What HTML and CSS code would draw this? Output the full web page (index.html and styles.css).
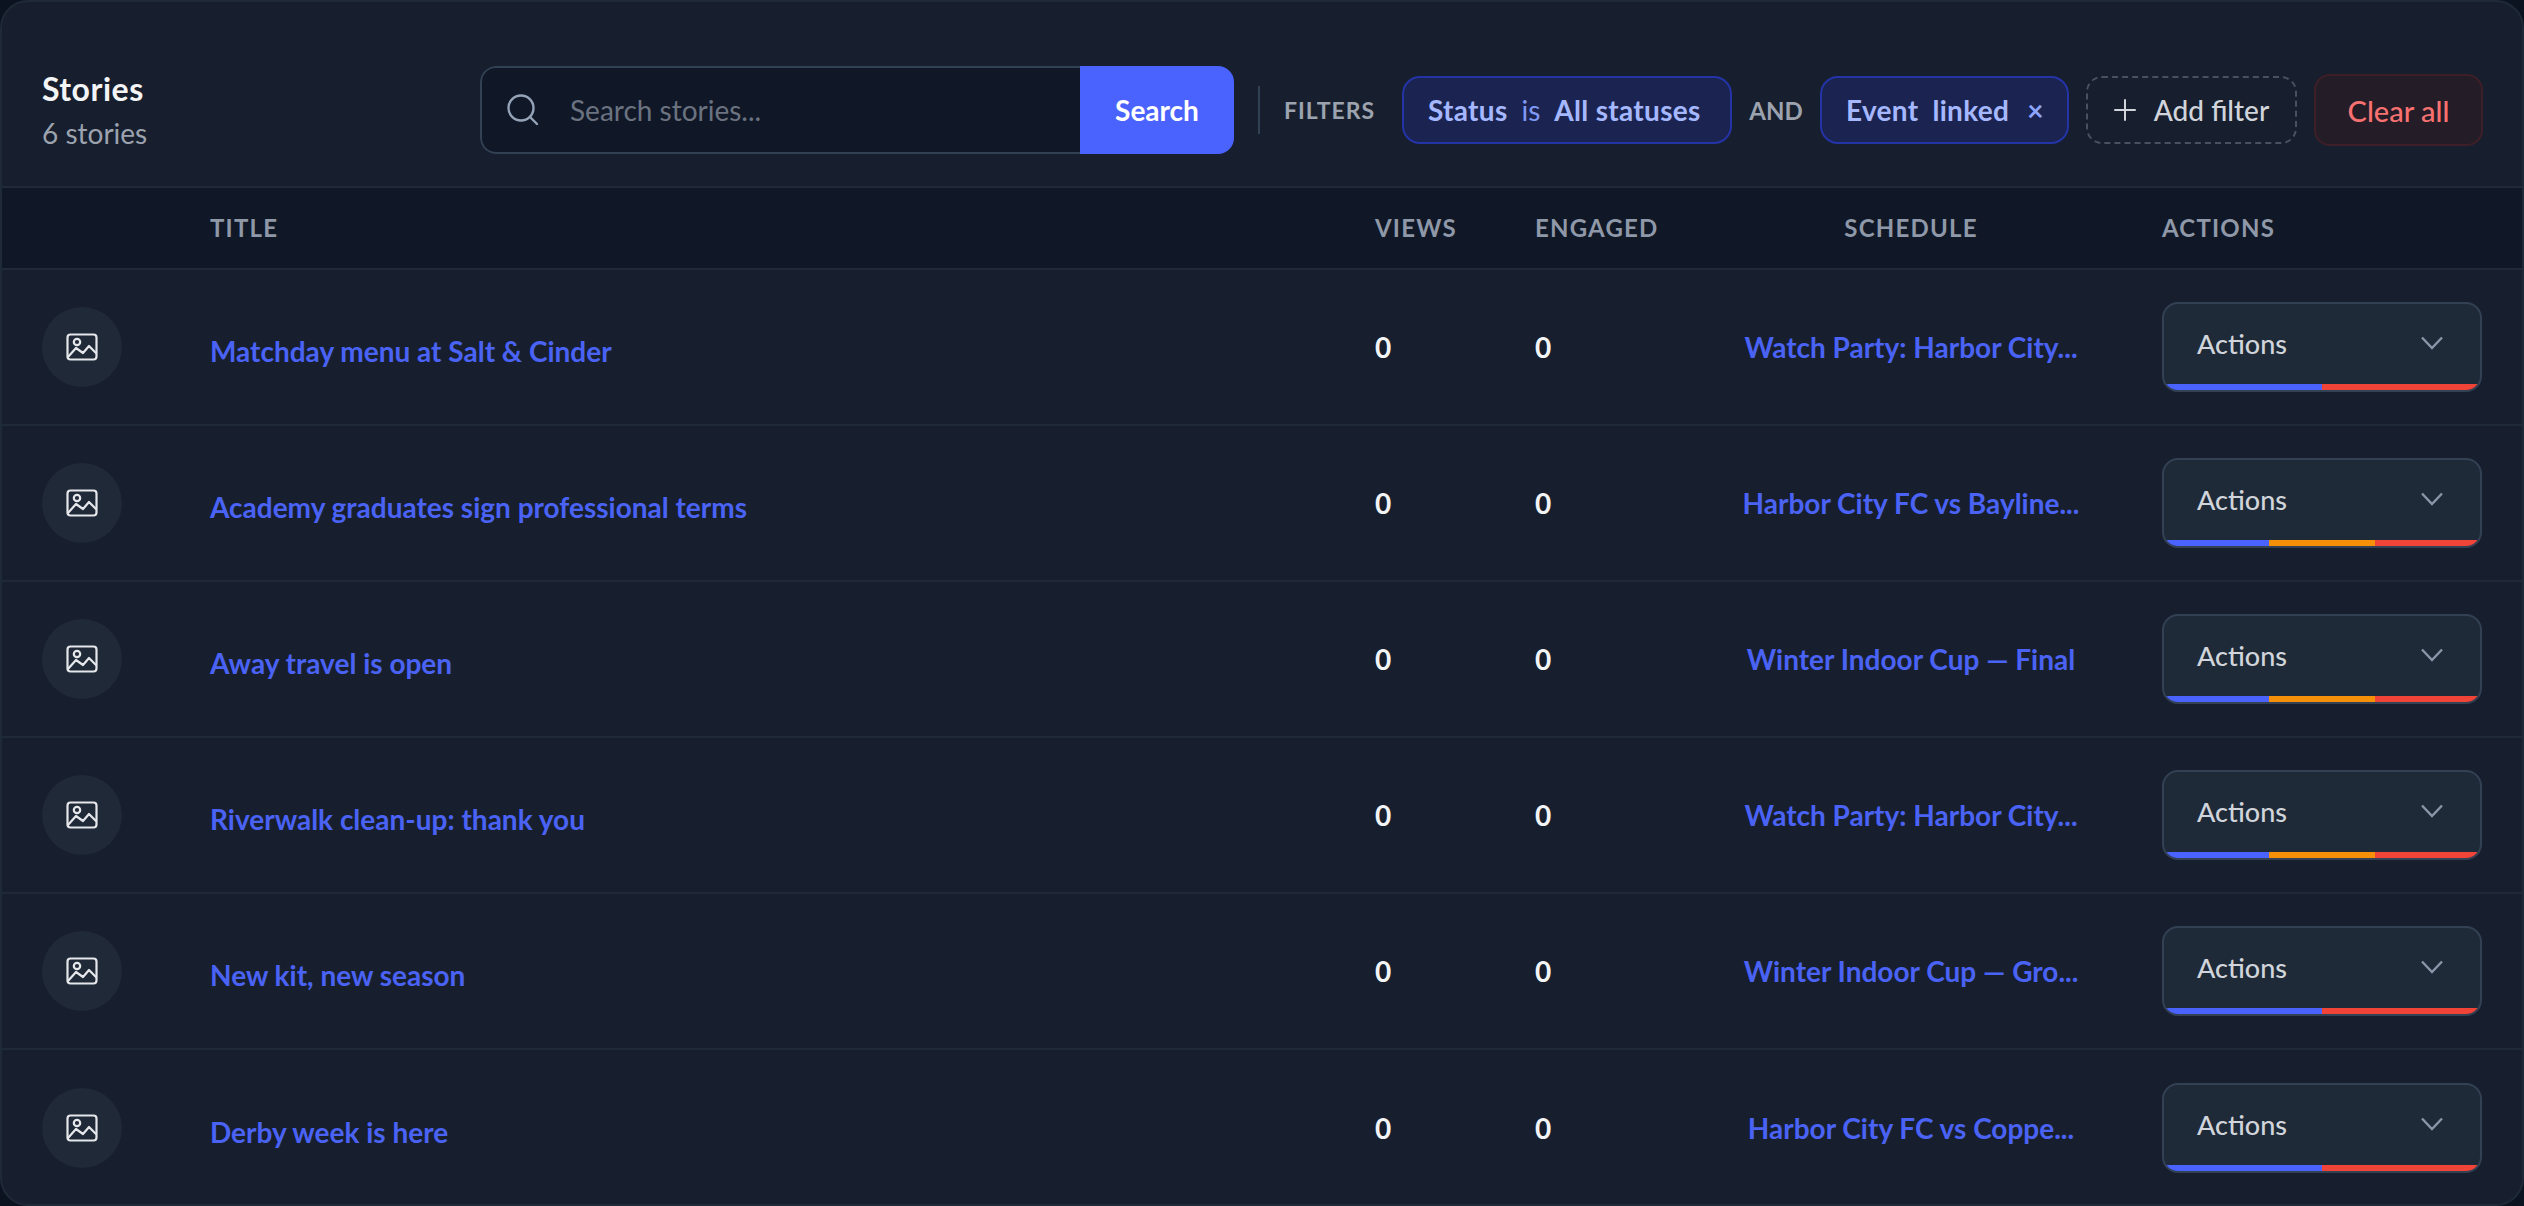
FILE: index.html
```html
<!DOCTYPE html>
<html lang="en">

<head>
    <meta charset="UTF-8">
    <title>Stories</title>
    <link rel="stylesheet" href="styles.css">
</head>

<body>
    <div class="panel">
        <div class="toolbar">
            <div class="heading">
                <div class="heading-title">Stories</div>
                <div class="heading-count">6 stories</div>
            </div>
            <div class="search">
                <div class="search-field">
                    <svg class="search-icon" width="34" height="34" viewBox="0 0 34 34" fill="none" stroke="#94a3b8" stroke-width="2.4" stroke-linecap="round">
                        <circle cx="15" cy="15" r="12.5"/>
                        <path d="M24.5 24.5 L31 31"/>
                    </svg>
                    <div class="search-input">Search stories...</div>
                </div>
                <div class="search-button">Search</div>
            </div>
            <div class="divider"></div>
            <div class="filters-label">FILTERS</div>
            <div class="chip chip-status"><b>Status</b><span>is</span><b>All statuses</b></div>
            <div class="and-label">AND</div>
            <div class="chip chip-event"><b>Event</b><b>linked</b><i>×</i></div>
            <div class="add-filter">
                <svg width="22" height="22" viewBox="0 0 22 22" stroke="#d1d5db" stroke-width="2" stroke-linecap="round">
                    <path d="M11 1 V21 M1 11 H21"/>
                </svg>
                <span>Add filter</span>
            </div>
            <div class="clear-all">Clear all</div>
        </div>

        <div class="row head-row">
            <div></div>
            <div>TITLE</div>
            <div>VIEWS</div>
            <div>ENGAGED</div>
            <div class="center">SCHEDULE</div>
            <div class="head-actions">ACTIONS</div>
        </div>

        <div class="row story">
            <div class="thumb">
                <svg width="32" height="28" viewBox="0 0 32 28" fill="none" stroke="#e5e7eb" stroke-width="2.2" stroke-linejoin="round" stroke-linecap="round">
                    <rect x="1.5" y="1.5" width="29" height="25" rx="3"/>
                    <circle cx="11" cy="9" r="3.2"/>
                    <path d="M2 24 L10 15 L17 20 L23 13 L30 20"/>
                </svg>
            </div>
            <div class="story-title">Matchday menu at Salt &amp; Cinder</div>
            <div class="num">0</div>
            <div class="num">0</div>
            <div class="schedule">Watch Party: Harbor City...</div>
            <div class="actions">
                <span>Actions</span>
                <svg width="22" height="14" viewBox="0 0 22 14" fill="none" stroke="#8a96a8" stroke-width="2.4"><path d="M1 1.5 L11 12 L21 1.5"/></svg>
                <div class="bar"><em class="blue"></em><em class="red"></em></div>
            </div>
        </div>

        <div class="row story">
            <div class="thumb">
                <svg width="32" height="28" viewBox="0 0 32 28" fill="none" stroke="#e5e7eb" stroke-width="2.2" stroke-linejoin="round" stroke-linecap="round">
                    <rect x="1.5" y="1.5" width="29" height="25" rx="3"/>
                    <circle cx="11" cy="9" r="3.2"/>
                    <path d="M2 24 L10 15 L17 20 L23 13 L30 20"/>
                </svg>
            </div>
            <div class="story-title">Academy graduates sign professional terms</div>
            <div class="num">0</div>
            <div class="num">0</div>
            <div class="schedule">Harbor City FC vs Bayline...</div>
            <div class="actions">
                <span>Actions</span>
                <svg width="22" height="14" viewBox="0 0 22 14" fill="none" stroke="#8a96a8" stroke-width="2.4"><path d="M1 1.5 L11 12 L21 1.5"/></svg>
                <div class="bar"><em class="blue"></em><em class="orange"></em><em class="red"></em></div>
            </div>
        </div>

        <div class="row story">
            <div class="thumb">
                <svg width="32" height="28" viewBox="0 0 32 28" fill="none" stroke="#e5e7eb" stroke-width="2.2" stroke-linejoin="round" stroke-linecap="round">
                    <rect x="1.5" y="1.5" width="29" height="25" rx="3"/>
                    <circle cx="11" cy="9" r="3.2"/>
                    <path d="M2 24 L10 15 L17 20 L23 13 L30 20"/>
                </svg>
            </div>
            <div class="story-title">Away travel is open</div>
            <div class="num">0</div>
            <div class="num">0</div>
            <div class="schedule">Winter Indoor Cup — Final</div>
            <div class="actions">
                <span>Actions</span>
                <svg width="22" height="14" viewBox="0 0 22 14" fill="none" stroke="#8a96a8" stroke-width="2.4"><path d="M1 1.5 L11 12 L21 1.5"/></svg>
                <div class="bar"><em class="blue"></em><em class="orange"></em><em class="red"></em></div>
            </div>
        </div>

        <div class="row story">
            <div class="thumb">
                <svg width="32" height="28" viewBox="0 0 32 28" fill="none" stroke="#e5e7eb" stroke-width="2.2" stroke-linejoin="round" stroke-linecap="round">
                    <rect x="1.5" y="1.5" width="29" height="25" rx="3"/>
                    <circle cx="11" cy="9" r="3.2"/>
                    <path d="M2 24 L10 15 L17 20 L23 13 L30 20"/>
                </svg>
            </div>
            <div class="story-title">Riverwalk clean-up: thank you</div>
            <div class="num">0</div>
            <div class="num">0</div>
            <div class="schedule">Watch Party: Harbor City...</div>
            <div class="actions">
                <span>Actions</span>
                <svg width="22" height="14" viewBox="0 0 22 14" fill="none" stroke="#8a96a8" stroke-width="2.4"><path d="M1 1.5 L11 12 L21 1.5"/></svg>
                <div class="bar"><em class="blue"></em><em class="orange"></em><em class="red"></em></div>
            </div>
        </div>

        <div class="row story">
            <div class="thumb">
                <svg width="32" height="28" viewBox="0 0 32 28" fill="none" stroke="#e5e7eb" stroke-width="2.2" stroke-linejoin="round" stroke-linecap="round">
                    <rect x="1.5" y="1.5" width="29" height="25" rx="3"/>
                    <circle cx="11" cy="9" r="3.2"/>
                    <path d="M2 24 L10 15 L17 20 L23 13 L30 20"/>
                </svg>
            </div>
            <div class="story-title">New kit, new season</div>
            <div class="num">0</div>
            <div class="num">0</div>
            <div class="schedule">Winter Indoor Cup — Gro...</div>
            <div class="actions">
                <span>Actions</span>
                <svg width="22" height="14" viewBox="0 0 22 14" fill="none" stroke="#8a96a8" stroke-width="2.4"><path d="M1 1.5 L11 12 L21 1.5"/></svg>
                <div class="bar"><em class="blue"></em><em class="red"></em></div>
            </div>
        </div>

        <div class="row story">
            <div class="thumb">
                <svg width="32" height="28" viewBox="0 0 32 28" fill="none" stroke="#e5e7eb" stroke-width="2.2" stroke-linejoin="round" stroke-linecap="round">
                    <rect x="1.5" y="1.5" width="29" height="25" rx="3"/>
                    <circle cx="11" cy="9" r="3.2"/>
                    <path d="M2 24 L10 15 L17 20 L23 13 L30 20"/>
                </svg>
            </div>
            <div class="story-title">Derby week is here</div>
            <div class="num">0</div>
            <div class="num">0</div>
            <div class="schedule">Harbor City FC vs Coppe...</div>
            <div class="actions">
                <span>Actions</span>
                <svg width="22" height="14" viewBox="0 0 22 14" fill="none" stroke="#8a96a8" stroke-width="2.4"><path d="M1 1.5 L11 12 L21 1.5"/></svg>
                <div class="bar"><em class="blue"></em><em class="red"></em></div>
            </div>
        </div>
    </div>
</body>

</html>
```

FILE: styles.css
```css
* {
    box-sizing: border-box;
}

body {
    margin: 0;
    height: 1206px;
    overflow: hidden;
    background-color: #0b1220;
    font-family: Lato, "Noto Sans", sans-serif;
}

.panel {
    height: 1206px;
    background-color: #171f2e;
    border: 2px solid #1e2a38;
    border-radius: 28px;
    overflow: hidden;
}

.toolbar {
    height: 186px;
    display: flex;
    align-items: center;
    padding: 32px 40px 0;
    border-bottom: 2px solid #1e2a38;
}

.heading {
    width: 438px;
    flex: none;
}

.heading-title {
    font-size: 32px;
    font-weight: 700;
    letter-spacing: 0.5px;
    line-height: 40px;
    color: #f3f4f6;
}

.heading-count {
    margin-top: 6px;
    font-size: 28px;
    line-height: 36px;
    color: #9ca3af;
}

.search {
    width: 754px;
    height: 88px;
    flex: none;
    display: flex;
    border-radius: 16px;
    overflow: hidden;
}

.search-field {
    flex: 1;
    display: flex;
    align-items: center;
    background-color: #101827;
    border: 2px solid #334155;
    border-right: 0;
    border-radius: 16px 0 0 16px;
}

.search-icon {
    margin-left: 24px;
    flex: none;
}

.search-input {
    margin-left: 30px;
    font-size: 28px;
    color: #6b7280;
}

.search-button {
    width: 154px;
    flex: none;
    display: flex;
    align-items: center;
    justify-content: center;
    background-color: #4a63ff;
    color: #fff;
    font-size: 28px;
    font-weight: 700;
}

.divider {
    width: 2px;
    height: 48px;
    flex: none;
    margin-left: 24px;
    background-color: #334155;
}

.filters-label {
    margin-left: 24px;
    width: 118px;
    flex: none;
    font-size: 23px;
    font-weight: 700;
    letter-spacing: 1px;
    color: #9ca3af;
}

.chip {
    height: 68px;
    flex: none;
    display: flex;
    align-items: center;
    gap: 14px;
    padding: 0 24px;
    background-color: #1b2450;
    border: 2px solid #2433a6;
    border-radius: 18px;
    font-size: 28px;
    color: #a5b8ff;
}

.chip b {
    font-weight: 700;
    letter-spacing: 0.3px;
}

.chip span {
    color: #8098f5;
}

.chip i {
    font-style: normal;
    font-weight: 700;
    font-size: 28px;
    margin-left: 4px;
    color: #8ea4ff;
}

.chip-status {
    width: 330px;
}

.chip-event {
    width: 249px;
}

.and-label {
    width: 88px;
    flex: none;
    text-align: center;
    font-size: 24px;
    font-weight: 700;
    color: #9ca3af;
}

.add-filter {
    width: 211px;
    height: 68px;
    flex: none;
    margin-left: 17px;
    display: flex;
    align-items: center;
    justify-content: center;
    gap: 18px;
    border: 2px dashed #475162;
    border-radius: 16px;
    font-size: 28px;
    font-weight: 500;
    color: #d1d5db;
}

.clear-all {
    width: 169px;
    height: 72px;
    flex: none;
    margin-left: 17px;
    display: flex;
    align-items: center;
    justify-content: center;
    background-color: #241c26;
    border: 2px solid #3e1f27;
    border-radius: 16px;
    font-size: 29px;
    font-weight: 500;
    color: #f87171;
}

.row {
    display: grid;
    grid-template-columns: 208px 1165px 160px 203px 346px 1fr;
    align-items: center;
    border-bottom: 2px solid #1e2a38;
}

.row:last-child {
    border-bottom: 0;
}

.head-row {
    height: 82px;
    padding-bottom: 2px;
    background-color: #101827;
    font-size: 24px;
    font-weight: 700;
    letter-spacing: 1.2px;
    color: #8f98a8;
}

.center {
    text-align: center;
}

.head-actions {
    margin-left: 78px;
}

.story {
    height: 156px;
}

.thumb {
    width: 80px;
    height: 80px;
    margin-left: 40px;
    display: flex;
    align-items: center;
    justify-content: center;
    background-color: #1f2937;
    border-radius: 50%;
}

.story-title {
    margin-top: 8px;
    font-size: 28px;
    font-weight: 700;
    color: #4a63f5;
}

.num {
    font-size: 28px;
    font-weight: 700;
    color: #f3f4f6;
}

.schedule {
    font-size: 28px;
    font-weight: 700;
    text-align: center;
    white-space: nowrap;
    color: #4a63f5;
}

.actions {
    position: relative;
    width: 320px;
    height: 90px;
    margin-left: 78px;
    display: flex;
    align-items: center;
    justify-content: space-between;
    padding: 0 37px 8px 33px;
    background-color: #1e2a38;
    border: 2px solid #334155;
    border-radius: 16px;
    overflow: hidden;
    font-size: 27px;
    font-weight: 500;
    color: #d1d5db;
}

.bar {
    position: absolute;
    left: 0;
    right: 0;
    bottom: 0;
    height: 6px;
    display: flex;
}

.bar em {
    flex: 1;
}

.blue {
    background-color: #4a63ff;
}

.orange {
    background-color: #f79009;
}

.red {
    background-color: #f04438;
}
```
